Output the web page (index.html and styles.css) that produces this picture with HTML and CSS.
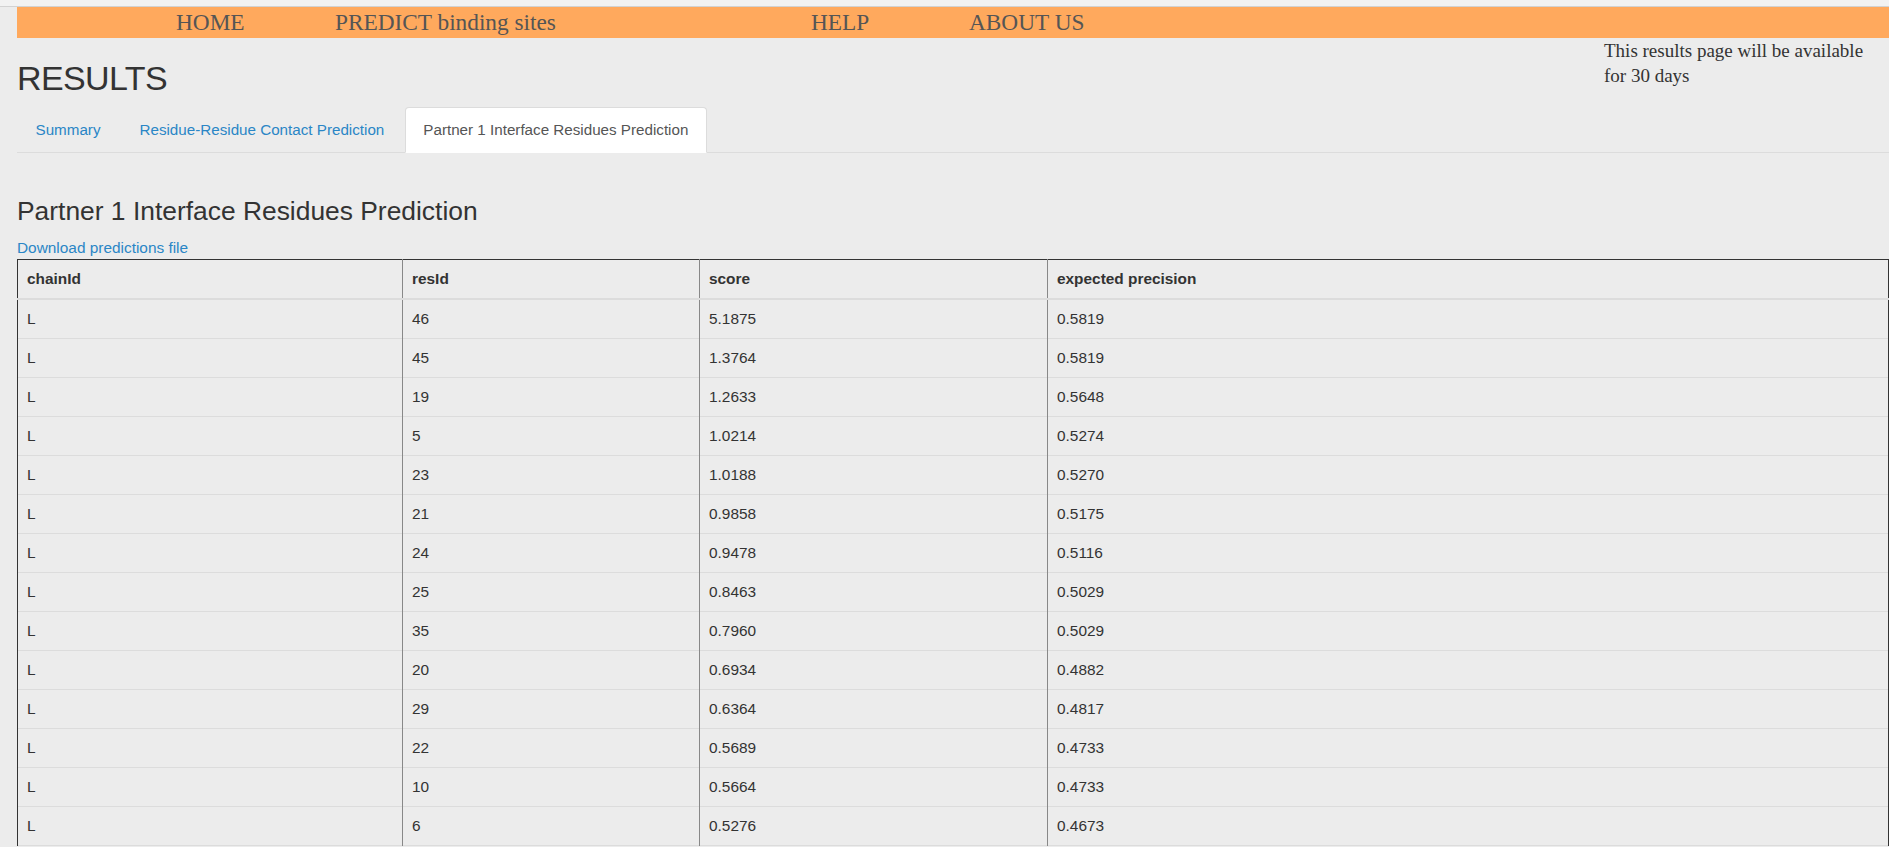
FILE: index.html
```html
<!DOCTYPE html>
<html lang="en">
<head>
<meta charset="utf-8">
<title>RESULTS</title>
<link rel="stylesheet" href="styles.css">
</head>
<body>
<div class="topstrip"></div>
<nav class="mainnav">
  <a class="nav-item nav-home" href="#">HOME</a>
  <a class="nav-item nav-predict" href="#">PREDICT binding sites</a>
  <a class="nav-item nav-help" href="#">HELP</a>
  <a class="nav-item nav-about" href="#">ABOUT US</a>
</nav>
<div class="page">
  <div class="page-head">
    <h1 class="title">RESULTS</h1>
    <p class="note">This results page will be available for 30 days</p>
  </div>
  <ul class="tabs">
    <li><a href="#">Summary</a></li>
    <li><a href="#">Residue-Residue Contact Prediction</a></li>
    <li class="active"><a href="#">Partner 1 Interface Residues Prediction</a></li>
  </ul>
  <section class="pane">
    <h3 class="pane-title">Partner 1 Interface Residues Prediction</h3>
    <a class="download" href="#">Download predictions file</a>
    <table class="results">
      <colgroup>
        <col class="c1"><col class="c2"><col class="c3"><col class="c4">
      </colgroup>
      <thead>
        <tr><th>chainId</th><th>resId</th><th>score</th><th>expected precision</th></tr>
      </thead>
      <tbody>
        <tr><td>L</td><td>46</td><td>5.1875</td><td>0.5819</td></tr>
        <tr><td>L</td><td>45</td><td>1.3764</td><td>0.5819</td></tr>
        <tr><td>L</td><td>19</td><td>1.2633</td><td>0.5648</td></tr>
        <tr><td>L</td><td>5</td><td>1.0214</td><td>0.5274</td></tr>
        <tr><td>L</td><td>23</td><td>1.0188</td><td>0.5270</td></tr>
        <tr><td>L</td><td>21</td><td>0.9858</td><td>0.5175</td></tr>
        <tr><td>L</td><td>24</td><td>0.9478</td><td>0.5116</td></tr>
        <tr><td>L</td><td>25</td><td>0.8463</td><td>0.5029</td></tr>
        <tr><td>L</td><td>35</td><td>0.7960</td><td>0.5029</td></tr>
        <tr><td>L</td><td>20</td><td>0.6934</td><td>0.4882</td></tr>
        <tr><td>L</td><td>29</td><td>0.6364</td><td>0.4817</td></tr>
        <tr><td>L</td><td>22</td><td>0.5689</td><td>0.4733</td></tr>
        <tr><td>L</td><td>10</td><td>0.5664</td><td>0.4733</td></tr>
        <tr><td>L</td><td>6</td><td>0.5276</td><td>0.4673</td></tr>
      </tbody>
    </table>
  </section>
</div>
</body>
</html>
```
FILE: styles.css
```css
html {
  overflow: hidden;
}
body {
  margin: 0;
  background: #ececec;
  color: #333;
  font-family: "Liberation Sans", Arial, sans-serif;
  font-size: 15.4px;
  line-height: 22px;
}
a {
  text-decoration: none;
}
.topstrip {
  height: 6px;
  background: #f2f2f2;
  border-bottom: 1px solid #d2d2d2;
}
.mainnav {
  display: flex;
  margin-left: 17px;
  padding-left: 159px;
  height: 31px;
  background: #ffa95d;
  font-family: "Liberation Serif", "Times New Roman", serif;
  font-size: 23.3px;
  line-height: 31px;
}
.nav-item {
  color: #555;
  white-space: nowrap;
}
.nav-home { flex: 0 0 159px; }
.nav-predict { flex: 0 0 476px; }
.nav-help { flex: 0 0 158px; }
.nav-about { flex: 0 0 auto; }

.page {
  padding-left: 17px;
}
.page-head {
  display: flex;
  justify-content: space-between;
  align-items: flex-start;
}
.title {
  margin: 21.5px 0 10.5px;
  font-size: 34px;
  font-weight: normal;
  line-height: 37px;
  letter-spacing: -0.6px;
  color: #333;
}
.note {
  margin: 0 15px 0 0;
  width: 270px;
  font-family: "Liberation Serif", "Times New Roman", serif;
  font-size: 19px;
  line-height: 25px;
  color: #333;
}
.tabs {
  display: flex;
  list-style: none;
  margin: 0;
  padding: 0;
  border-bottom: 1px solid #dcdcdc;
  font-size: 15.2px;
}
.tabs li {
  margin-bottom: -1px;
  margin-right: 2px;
}
.tabs a {
  display: block;
  padding: 11px 17.5px;
  border: 1px solid transparent;
  border-radius: 4px 4px 0 0;
  color: #2a86c6;
}
.tabs .active a {
  background: #fff;
  border-color: #dcdcdc #dcdcdc transparent;
  color: #555;
}
.pane-title {
  margin: 44px 0 11px;
  font-size: 26.4px;
  font-weight: normal;
  line-height: 29px;
  color: #333;
}
.download {
  display: block;
  color: #2a86c6;
}
.results {
  width: 100%;
  table-layout: fixed;
  border-collapse: collapse;
  border: 1px solid #333;
  border-bottom-color: #dcdcdc;
}
.c1 { width: 385px; }
.c2 { width: 297px; }
.c3 { width: 348px; }
.results th,
.results td {
  padding: 8px 9px;
  text-align: left;
  border-left: 1px solid #888;
  border-right: 1px solid #888;
}
.results th {
  font-weight: bold;
  border-bottom: 2px solid #dcdcdc;
}
.results td {
  border-top: 1px solid #dcdcdc;
}
.results tr > :first-child {
  border-left: 1px solid #333;
}
.results tr > :last-child {
  border-right: 1px solid #333;
}
```
